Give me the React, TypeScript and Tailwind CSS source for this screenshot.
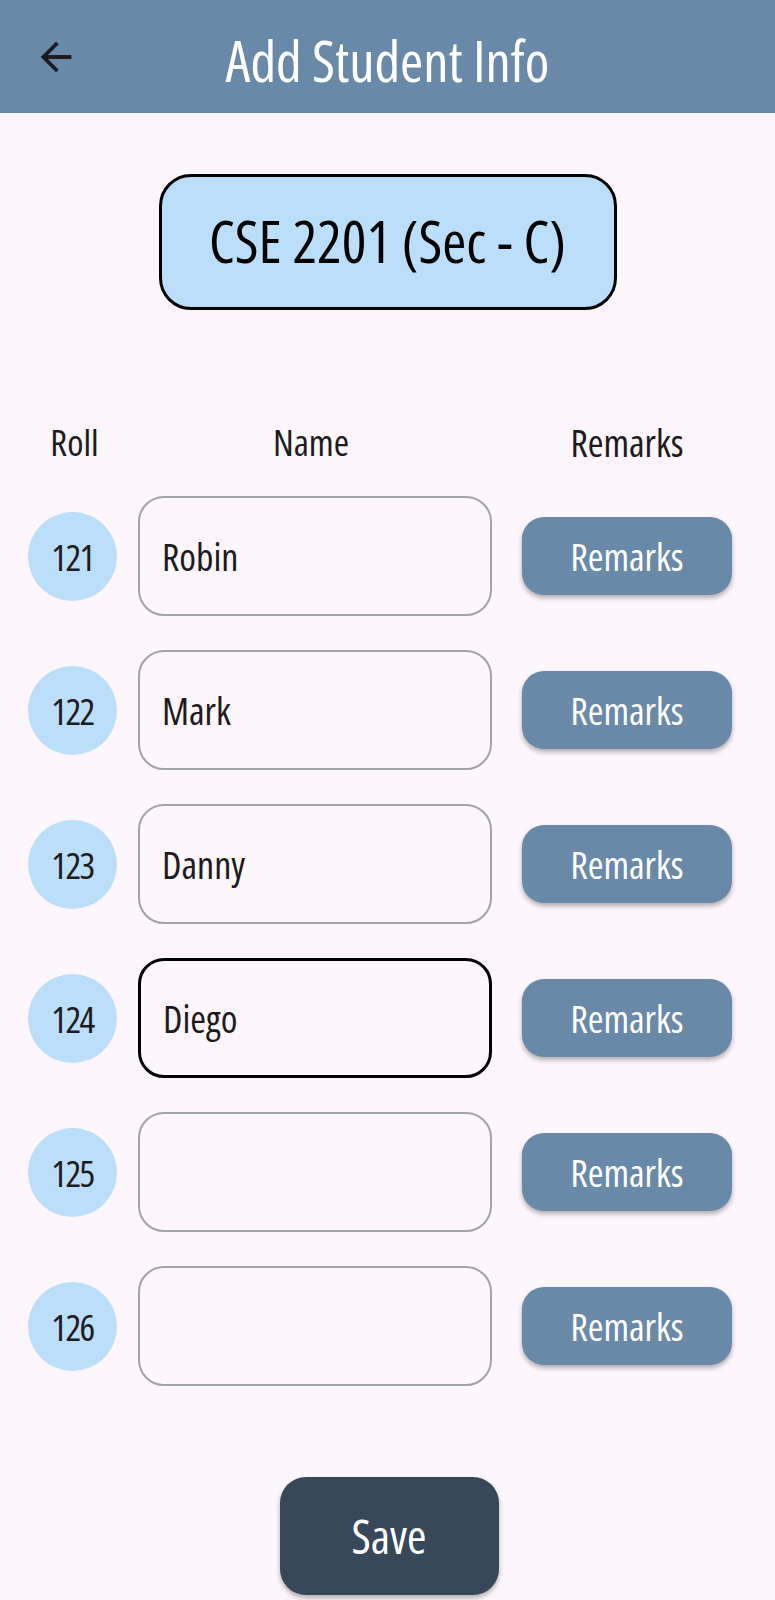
import { useState } from "react";

const font = {
  fontFamily: '"Open Sans", "DejaVu Sans", sans-serif',
  fontStretch: "75%",
};

const students = [
  { roll: 121, name: "Robin" },
  { roll: 122, name: "Mark" },
  { roll: 123, name: "Danny" },
  { roll: 124, name: "Diego", focused: true },
  { roll: 125, name: "" },
  { roll: 126, name: "" },
];

export default function App() {
  return (
    <div className="min-h-[1600px] w-full bg-[#fdf6fc] text-[#1d1b20]" style={font}>
      <Header />
      <div className="flex justify-center pt-[61px]">
        <div className="flex h-[136px] w-[458px] items-center justify-center rounded-[32px] border-[3px] border-black bg-[#bbdefb] pb-[2px] text-[58px] leading-none text-black">
          CSE 2201 (Sec - C)
        </div>
      </div>

      <div className="mt-[108px] grid grid-cols-[89px_354px_210px] gap-x-[21px] pl-[28px] text-center text-[37px] leading-[48px]">
        <div className="pl-[4px]">Roll</div>
        <div className="pr-[8px]">Name</div>
        <div className="ml-[18px] text-[38px]">Remarks</div>
      </div>

      <div className="mt-[30px] flex flex-col gap-[34px] pl-[28px]">
        {students.map((s) => (
          <StudentRow key={s.roll} {...s} />
        ))}
      </div>

      <div className="mt-[91px] flex justify-center pl-[3px]">
        <button
          type="button"
          className="h-[118px] w-[219px] rounded-[26px] bg-[#37485a] text-[47px] leading-none text-white shadow-[0_3px_5px_rgba(0,0,0,0.3)]"
          style={font}
        >
          Save
        </button>
      </div>
    </div>
  );
}

function Header() {
  return (
    <header className="grid h-[113px] grid-cols-[1fr_auto_1fr] items-center bg-[#6989a9]">
      <div className="pl-[33px]">
        <svg width="46" height="46" viewBox="0 0 24 24" fill="#1d1b20">
          <path d="M20 11H7.83l5.59-5.59L12 4l-8 8 8 8 1.41-1.41L7.83 13H20v-2z" />
        </svg>
      </div>
      <h1 className="pt-[6px] text-[56px] leading-none text-white">Add Student Info</h1>
      <div />
    </header>
  );
}

function StudentRow({ roll, name, focused }: { roll: number; name: string; focused?: boolean }) {
  const [value, setValue] = useState(name);

  return (
    <div className="grid grid-cols-[89px_354px_210px] items-center gap-x-[21px]">
      <div className="flex h-[89px] w-[89px] items-center justify-center rounded-full bg-[#bbdefb] text-[37px] leading-none tracking-[-1.5px]">
        {roll}
      </div>
      <input
        value={value}
        onChange={(e) => setValue(e.target.value)}
        className={
          focused
            ? "h-[120px] w-[354px] rounded-[26px] border-[3px] border-black bg-transparent px-[22px] text-[38px] text-[#1d1b20] outline-none"
            : "h-[120px] w-[354px] rounded-[26px] border-[2.5px] border-[#a3a3a3] bg-transparent px-[22px] text-[38px] text-[#1d1b20] outline-none"
        }
        style={font}
      />
      <button
        type="button"
        className="ml-[9px] h-[78px] w-[210px] rounded-[22px] bg-[#6989a9] text-[38px] leading-none text-white shadow-[0_3px_5px_rgba(0,0,0,0.3)]"
        style={font}
      >
        Remarks
      </button>
    </div>
  );
}
